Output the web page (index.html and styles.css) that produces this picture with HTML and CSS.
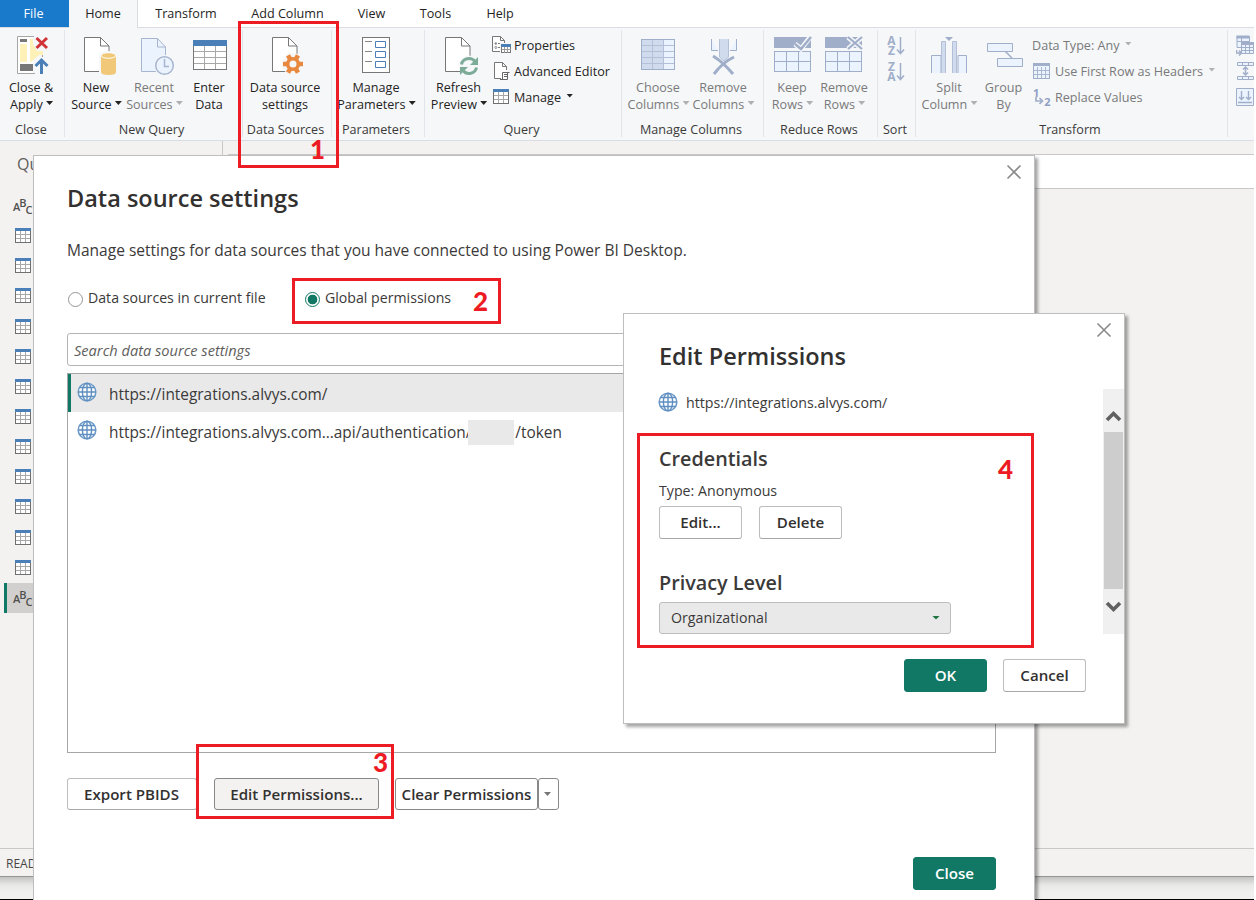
FILE: index.html
```
<!DOCTYPE html>
<html lang="en">
<head>
    <meta charset="UTF-8">
    <meta name="viewport" content="width=device-width, initial-scale=1.0">
    <title>Power Query Editor</title>
    <link rel="stylesheet" href="styles.css">
</head>
<body>
    <!-- Shared icons -->
    <svg class="sprite" width="0" height="0">
        <symbol id="page" viewBox="0 0 26 36">
            <path d="M.5 .5H16.5L25 9V34.5H.5Z" fill="#fff" stroke="#777"/>
            <path d="M16.5 .5V9H25" fill="none" stroke="#777"/>
        </symbol>
        <symbol id="table" viewBox="0 0 16 15">
            <rect width="16" height="15" fill="#707070"/>
            <rect x="1" y="3" width="14" height="11" fill="#fff"/>
            <path d="M5.5 3V14M10.5 3V14M1 6.5H15M1 10.5H15" stroke="#a8a8a8" fill="none"/>
            <rect width="16" height="3" fill="#4a7fb8"/>
        </symbol>
        <symbol id="globe" viewBox="0 0 20 20">
            <circle cx="10" cy="10" r="8.8" fill="#fff" stroke="#6f9bc8" stroke-width="1.6"/>
            <ellipse cx="10" cy="10" rx="4.6" ry="8.8" fill="none" stroke="#5f8fc1" stroke-width="1.4"/>
            <path d="M10 1V19M1 10H19M2.5 5.5H17.5M2.5 14.5H17.5" stroke="#5f8fc1" stroke-width="1.4"/>
        </symbol>
        <symbol id="cross" viewBox="0 0 16 16">
            <path d="M1.5 1.5L14.5 14.5M14.5 1.5L1.5 14.5" stroke="#8a8a8a" stroke-width="1.6"/>
        </symbol>
    </svg>

    <div class="app">
        <nav class="tabs">
            <span class="tab tab-file">File</span>
            <span class="tab tab-home">Home</span>
            <span class="tab tab-transform">Transform</span>
            <span class="tab tab-add">Add Column</span>
            <span class="tab tab-view">View</span>
            <span class="tab tab-tools">Tools</span>
            <span class="tab tab-help">Help</span>
        </nav>

        <div class="ribbon">
            <div class="group g-close">
                <div class="group-body">
                    <div class="item">
                        <svg width="40" height="40" viewBox="0 0 40 40">
                            <path d="M22 1.500H6.500V38.500H22" fill="#fff" stroke="#a6a6a6"/>
                            <path d="M22 1.500H23M31.500 16V22M22 38.500H24" stroke="#a6a6a6"/>
                            <rect x="9" y="4" width="7" height="3" fill="#777"/>
                            <path d="M9 9H16V27H9ZM19 4H22V9L26 16H32V20L28 20L20 27H19Z" fill="#fff1b8"/>
                            <rect x="9" y="29" width="13" height="7" fill="#777"/>
                            <path d="M25.500 3L36 13M36 3L25.500 13" stroke="#d13438" stroke-width="3"/>
                            <path d="M24.500 31L30.500 25L36.500 31M30.500 26V39" fill="none" stroke="#4a7fb8" stroke-width="3"/>
                        </svg>
                        <span>Close &amp;</span><span>Apply <i class="caret"></i></span>
                    </div>
                </div>
                <div class="group-name">Close</div>
            </div>

            <div class="group g-new">
                <div class="group-body">
                    <div class="item">
                        <svg width="40" height="40" viewBox="0 0 40 40">
                            <use href="#page" x="8" y="2" width="26" height="36"/>
                            <path d="M23 20Q23 16 32 16Q41 16 41 20V41H23Z" fill="#f5f7f9"/>
                            <path d="M25 21V37Q25 40 32.500 40Q40 40 40 37V21Z" fill="#f0c878"/>
                            <ellipse cx="32.500" cy="20.500" rx="7.300" ry="2.800" fill="#f0c878" stroke="#fff"/>
                        </svg>
                        <span>New</span><span>Source <i class="caret"></i></span>
                    </div>
                    <div class="item off">
                        <svg width="40" height="40" viewBox="0 0 40 40">
                            <path d="M7.500 3.500H23.500L31.500 12V36.500H7.500Z" fill="#ebf3fe" stroke="#a7b5d0"/>
                            <path d="M23.500 3.500V12H31.500" fill="none" stroke="#a7b5d0"/>
                            <circle cx="30.500" cy="30.500" r="10.500" fill="#f5f7f9"/>
                            <circle cx="30.500" cy="30.500" r="8.800" fill="#ebf3fe" stroke="#a7b5d0" stroke-width="1.500"/>
                            <path d="M30.500 24V31.500H35" fill="none" stroke="#a7b5d0" stroke-width="1.500"/>
                        </svg>
                        <span>Recent</span><span>Sources <i class="caret"></i></span>
                    </div>
                    <div class="item">
                        <svg width="40" height="40" viewBox="0 0 40 40">
                            <rect x="4.500" y="5.500" width="33" height="29" fill="#fff" stroke="#777"/>
                            <path d="M15.500 11V34M26.500 11V34M5 16.500H37M5 22.500H37M5 28.500H37" stroke="#a8a8a8"/>
                            <rect x="4" y="5" width="34" height="6" fill="#4a7fb8"/>
                        </svg>
                        <span>Enter</span><span>Data</span>
                    </div>
                </div>
                <div class="group-name">New Query</div>
            </div>

            <div class="group g-sources">
                <div class="group-body">
                    <div class="item">
                        <svg width="40" height="40" viewBox="0 0 40 40">
                            <use href="#page" x="7" y="2" width="26" height="36"/>
                            <circle cx="28" cy="29" r="11" fill="#f5f7f9"/>
                            <g stroke="#e8893f" stroke-width="4.600">
                                <path d="M18 29H38M23 20.300L33 37.700M33 20.300L23 37.700"/>
                            </g>
                            <circle cx="28" cy="29" r="5.300" fill="#f5f7f9" stroke="#e8893f" stroke-width="3.600"/>
                        </svg>
                        <span>Data source</span><span>settings</span>
                    </div>
                </div>
                <div class="group-name">Data Sources</div>
            </div>

            <div class="group g-params">
                <div class="group-body">
                    <div class="item">
                        <svg width="40" height="40" viewBox="0 0 40 40">
                            <rect x="6.500" y="2.500" width="27" height="35" fill="#fff" stroke="#777"/>
                            <path d="M9 6.500H16M9 16.500H16M9 26.500H16" stroke="#888"/>
                            <path d="M19.500 6.500H29.500V12.500H19.500ZM19.500 16.500H29.500V22.500H19.500ZM19.500 26.500H29.500V32.500H19.500Z" fill="#fff" stroke="#4a7fb8"/>
                        </svg>
                        <span>Manage</span><span>Parameters <i class="caret"></i></span>
                    </div>
                </div>
                <div class="group-name">Parameters</div>
            </div>

            <div class="group g-query">
                <div class="group-body">
                    <div class="item">
                        <svg width="40" height="40" viewBox="0 0 40 40">
                            <use href="#page" x="6" y="2" width="26" height="36"/>
                            <circle cx="30" cy="31" r="10.500" fill="#f5f7f9"/>
                            <path d="M22.500 29.500A7.500 7 0 0 1 36 26.500M37.500 32.500A7.500 7 0 0 1 24 35.500" fill="none" stroke="#7cab98" stroke-width="3"/>
                            <path d="M39 22V30H31ZM21 40V32H29Z" fill="#7cab98"/>
                        </svg>
                        <span>Refresh</span><span>Preview <i class="caret"></i></span>
                    </div>
                    <div class="small-list">
                        <div class="small">
                            <svg width="20" height="20" viewBox="0 0 20 20">
                                <path d="M.5 1.500H8.500L12.500 5.500V16.500H.5Z" fill="#fff" stroke="#777"/>
                                <path d="M8.500 1.500V5.500H12.500M6 8.500H9M6 12.500H8" fill="none" stroke="#777"/>
                                <circle cx="3.800" cy="8.500" r="1.200" fill="#888"/><circle cx="3.800" cy="12.500" r="1" fill="none" stroke="#888"/>
                                <rect x="8" y="8" width="12" height="12" fill="#f5f7f9"/>
                                <rect x="9.500" y="9.500" width="9" height="8" fill="#fff" stroke="#777"/>
                                <path d="M12.500 12V18M15.500 12V18M10 14.500H19" stroke="#999"/>
                                <rect x="9" y="9" width="10" height="3" fill="#4a7fb8"/>
                            </svg>
                            <span>Properties</span>
                        </div>
                        <div class="small">
                            <svg width="20" height="20" viewBox="0 0 20 20">
                                <path d="M9 17.500H2.500V1.500H10.500L14.500 5.500V9" fill="#fff" stroke="#777"/>
                                <path d="M10.500 1.500V5.500H14.500" fill="none" stroke="#777"/>
                                <path d="M10.500 11.500H17.500M10.500 11.500V18.500H15.500V12M8 18.500H15" fill="#fff" stroke="#666"/>
                                <path d="M12 13.500H15M12 15.500H15" stroke="#666"/>
                            </svg>
                            <span>Advanced Editor</span>
                        </div>
                        <div class="small">
                            <svg width="20" height="20" viewBox="0 0 20 20"><use href="#table" x="1" y="2" width="16" height="15"/></svg>
                            <span>Manage <i class="caret"></i></span>
                        </div>
                    </div>
                </div>
                <div class="group-name">Query</div>
            </div>

            <div class="group g-columns">
                <div class="group-body">
                    <div class="item off">
                        <svg width="40" height="40" viewBox="0 0 40 40">
                            <rect x="3.500" y="4.500" width="33" height="30" fill="#ebf3fe" stroke="#a0aec9"/>
                            <rect x="4" y="5" width="22" height="29" fill="#d0dced"/>
                            <path d="M14.500 5V34M25.500 5V34M4 10.500H36M4 16.500H36M4 22.500H36M4 28.500H36" stroke="#b3c0d8"/>
                        </svg>
                        <span>Choose</span><span>Columns <i class="caret"></i></span>
                    </div>
                    <div class="item off">
                        <svg width="40" height="40" viewBox="0 0 40 40">
                            <path d="M8.500 4V15.500H15M33.500 4V15.500H27" fill="#ebf3fe" stroke="#a0aec9"/>
                            <path d="M16.500 4V22L21 26L25.500 22V4" fill="#d0dced" stroke="#b3c0d8"/>
                            <path d="M10 21L30 39M31 22L11 39" stroke="#f5f7f9" stroke-width="5"/>
                            <path d="M10 21Q20 27 30 39M31 22Q20 27 11 39" fill="none" stroke="#a0aec9" stroke-width="3"/>
                        </svg>
                        <span>Remove</span><span>Columns <i class="caret"></i></span>
                    </div>
                </div>
                <div class="group-name">Manage Columns</div>
            </div>

            <div class="group g-rows">
                <div class="group-body">
                    <div class="item off">
                        <svg width="40" height="40" viewBox="0 0 40 40">
                            <rect x="2" y="2" width="37" height="11" fill="#a0aec9"/>
                            <rect x="2.500" y="16.500" width="36" height="20" fill="#ebf3fe" stroke="#a0aec9"/>
                            <path d="M14.500 16V37M26.500 16V37M2 26.500H39" stroke="#a0aec9"/>
                            <path d="M23 9L29 14L39 1" fill="none" stroke="#f5f7f9" stroke-width="5"/>
                            <path d="M23 9L29 14L39 2" fill="none" stroke="#a0aec9" stroke-width="2.500"/>
                        </svg>
                        <span>Keep</span><span>Rows <i class="caret"></i></span>
                    </div>
                    <div class="item off">
                        <svg width="40" height="40" viewBox="0 0 40 40">
                            <rect x="1" y="2" width="37" height="11" fill="#a0aec9"/>
                            <rect x="1.500" y="16.500" width="36" height="20" fill="#ebf3fe" stroke="#a0aec9"/>
                            <path d="M13.500 16V37M25.500 16V37M1 26.500H38" stroke="#a0aec9"/>
                            <path d="M24 2L38 14M38 2L24 14" stroke="#f5f7f9" stroke-width="5"/>
                            <path d="M24 2L38 14M38 2L24 14" stroke="#a0aec9" stroke-width="2.200"/>
                        </svg>
                        <span>Remove</span><span>Rows <i class="caret"></i></span>
                    </div>
                </div>
                <div class="group-name">Reduce Rows</div>
            </div>

            <div class="group g-sort">
                <div class="group-body">
                    <div class="sort-icon">
                        <span><b>A</b><b>Z</b></span>
                        <svg width="9" height="19" viewBox="0 0 9 19"><path d="M4.500 1V17M1 13.500L4.500 17.500L8 13.500" fill="none" stroke="#a0aec9" stroke-width="1.500"/></svg>
                    </div>
                    <div class="sort-icon">
                        <span><b>Z</b><b>A</b></span>
                        <svg width="9" height="19" viewBox="0 0 9 19"><path d="M4.500 1V17M1 13.500L4.500 17.500L8 13.500" fill="none" stroke="#a0aec9" stroke-width="1.500"/></svg>
                    </div>
                </div>
                <div class="group-name">Sort</div>
            </div>

            <div class="group g-transform">
                <div class="group-body">
                    <div class="item off">
                        <svg width="40" height="40" viewBox="0 0 40 40">
                            <path d="M2.500 38V20.500H12V38M37.500 38V20.500H29V38" fill="#ebf3fe" stroke="#a0aec9"/>
                            <path d="M12.500 38V6.500H16.500V38M23.500 38V6.500H27.500V38" fill="#d0dced" stroke="#b3c0d8"/>
                            <path d="M16 2H24L20 6Z" fill="#a0aec9"/>
                        </svg>
                        <span>Split</span><span>Column <i class="caret"></i></span>
                    </div>
                    <div class="item off">
                        <svg width="40" height="40" viewBox="0 0 40 40">
                            <path d="M21 16L28 23" stroke="#a0aec9" stroke-width="1.500"/>
                            <path d="M3.500 8.500H28.500V16.500H3.500ZM13.500 23.500H38.500V31.500H13.500Z" fill="#ebf3fe" stroke="#a0aec9"/>
                        </svg>
                        <span>Group</span><span>By</span>
                    </div>
                    <div class="small-list off">
                        <div class="small"><span>Data Type: Any <i class="caret"></i></span></div>
                        <div class="small">
                            <svg width="20" height="20" viewBox="0 0 20 20">
                                <rect x="1.500" y="2.500" width="16" height="15" fill="#ebf3fe" stroke="#a0aec9"/>
                                <path d="M5.500 6V17M9.500 6V17M13.500 6V17M2 9.500H17M2 13.500H17" stroke="#a9b7d0"/>
                                <rect x="1" y="2" width="17" height="3" fill="#a0aec9"/>
                            </svg>
                            <span>Use First Row as Headers <i class="caret"></i></span>
                        </div>
                        <div class="small">
                            <span class="replace-icon"><b>1</b><svg width="9" height="8" viewBox="0 0 9 8"><path d="M1 0V4H7M4.500 1L7.500 4L4.500 7" fill="none" stroke="#a0aec9" stroke-width="1.700"/></svg><b>2</b></span>
                            <span>Replace Values</span>
                        </div>
                    </div>
                </div>
                <div class="group-name">Transform</div>
            </div>

            <div class="group g-more">
                <div class="group-body">
                    <svg width="18" height="72" viewBox="0 0 18 72" fill="#ebf3fe" stroke="#a0aec9">
                        <path d="M.5 1.500H13.500V12.500H1V2M1 6.500H13M5.500 3V12"/>
                        <path d="M.5 2H13.500" stroke-width="3"/>
                        <path d="M5.500 7.500H17.500V18.500H5.500ZM5 12.500H18M5 15.500H18M9.500 8V18M13.500 8V18"/>
                        <path d="M5 8.500H18" stroke-width="3"/>
                        <path d="M.5 15V18H5M3 15.500L5.500 18L3 20.500" fill="none" stroke-width="1.500"/>
                        <path d="M1.500 27.500H17.500V30.500H1.500ZM1.500 41.500H17.500V44.500H1.500ZM6.500 27V31M12.500 27V31M6.500 41V45M12.500 41V45"/>
                        <path d="M9.500 32V40M7 34.500L9.500 32L12 34.500M7 37.500L9.500 40L12 37.500" fill="none" stroke-width="1.500"/>
                        <path d="M.5 53.500H17.500V70.500H.5Z"/>
                        <path d="M5.500 56V64M3 62L5.500 64.500L8 62M12.500 56V64M10 62L12.500 64.500L15 62M2 67.500H16" fill="none" stroke-width="1.400"/>
                    </svg>
                </div>
            </div>
        </div>

        <div class="workspace">
            <aside class="queries">
                <h3>Queries</h3>
                <ul>
                    <li class="abc"><sub>A</sub><sup>B</sup><sub>C</sub></li>
                    <li><svg width="16" height="15"><use href="#table"/></svg></li>
                    <li><svg width="16" height="15"><use href="#table"/></svg></li>
                    <li><svg width="16" height="15"><use href="#table"/></svg></li>
                    <li><svg width="16" height="15"><use href="#table"/></svg></li>
                    <li><svg width="16" height="15"><use href="#table"/></svg></li>
                    <li><svg width="16" height="15"><use href="#table"/></svg></li>
                    <li><svg width="16" height="15"><use href="#table"/></svg></li>
                    <li><svg width="16" height="15"><use href="#table"/></svg></li>
                    <li><svg width="16" height="15"><use href="#table"/></svg></li>
                    <li><svg width="16" height="15"><use href="#table"/></svg></li>
                    <li><svg width="16" height="15"><use href="#table"/></svg></li>
                    <li><svg width="16" height="15"><use href="#table"/></svg></li>
                    <li class="abc selected"><sub>A</sub><sup>B</sup><sub>C</sub></li>
                </ul>
            </aside>
            <main class="content"><div class="formula-bar"></div></main>
        </div>
        <footer class="status">READY</footer>
        <div class="below"></div>

        <!-- Data source settings -->
        <section class="dialog settings">
            <svg class="dialog-close" width="16" height="16"><use href="#cross"/></svg>
            <h1>Data source settings</h1>
            <p class="intro">Manage settings for data sources that you have connected to using Power BI Desktop.</p>
            <div class="radios">
                <label><i class="radio"></i><span>Data sources in current file</span></label>
                <label><i class="radio on"></i><span>Global permissions</span></label>
            </div>
            <div class="search"><span>Search data source settings</span></div>
            <div class="sources">
                <div class="source active"><svg width="20" height="20"><use href="#globe"/></svg><span>https://integrations.alvys.com/</span></div>
                <div class="source"><svg width="20" height="20"><use href="#globe"/></svg><span>https://integrations.alvys.com...api/authentication/</span><i class="redacted"></i><span>/token</span></div>
            </div>
            <div class="actions">
                <span class="btn export">Export PBIDS</span>
                <span class="btn edit">Edit Permissions...</span>
                <span class="btn clear">Clear Permissions</span>
                <span class="btn more"><i class="caret"></i></span>
            </div>
            <div class="dialog-foot"><span class="btn primary">Close</span></div>
        </section>

        <!-- Edit permissions -->
        <section class="dialog permissions">
            <svg class="dialog-close" width="16" height="16"><use href="#cross"/></svg>
            <h1>Edit Permissions</h1>
            <div class="perm-main">
                <div class="perm-form">
                    <div class="perm-url"><svg width="20" height="20"><use href="#globe"/></svg><span>https://integrations.alvys.com/</span></div>
                    <h2>Credentials</h2>
                    <p class="type">Type: Anonymous</p>
                    <div class="cred-buttons"><span class="btn">Edit...</span><span class="btn">Delete</span></div>
                    <h2 class="privacy">Privacy Level</h2>
                    <div class="select"><span>Organizational</span><i class="caret"></i></div>
                </div>
                <div class="scrollbar">
                    <svg width="21" height="43" viewBox="0 0 21 43"><path d="M4 31L10.500 24.500L17 31" fill="none" stroke="#606060" stroke-width="3.600"/></svg>
                    <div class="thumb"></div>
                    <svg width="21" height="45" viewBox="0 0 21 45"><path d="M4 14L10.500 20.500L17 14" fill="none" stroke="#606060" stroke-width="3.600"/></svg>
                </div>
            </div>
            <div class="dialog-foot"><span class="btn primary">OK</span><span class="btn">Cancel</span></div>
        </section>

        <!-- Step callouts -->
        <div class="callout c1"><b>1</b></div>
        <div class="callout c2"><b>2</b></div>
        <div class="callout c3"><b>3</b></div>
        <div class="callout c4"><b>4</b></div>
    </div>
</body>
</html>
```
FILE: styles.css
```
* {
    margin: 0;
    padding: 0;
    box-sizing: border-box;
}

body {
    font-family: "Open Sans", "Noto Sans", sans-serif;
    font-size: 12.6px;
    color: #252423;
    background: #fff;
    overflow: hidden;
}

svg {
    display: block;
    flex: none;
}

.sprite {
    position: absolute;
}

.app {
    position: relative;
    width: 1254px;
    height: 900px;
    overflow: hidden;
    display: flex;
    flex-direction: column;
    white-space: nowrap;
}

/* Tabs */
.tabs {
    display: flex;
    height: 28px;
    flex: none;
    border-bottom: 1px solid #d9dce0;
}

.tab {
    line-height: 27px;
    text-align: center;
}

.tab-file {
    width: 69px;
    padding-right: 2px;
    background: #1979ca;
    color: #fff;
}

.tab-home {
    width: 69px;
    height: 28px;
    background: #f5f7f9;
    border-right: 1px solid #d9dce0;
}

.tab-transform { width: 96px; }
.tab-add { width: 107px; }
.tab-view { width: 61px; }
.tab-tools { width: 67px; }
.tab-help { width: 62px; }

/* Ribbon */
.ribbon {
    display: flex;
    height: 113px;
    flex: none;
    padding-top: 2px;
    background: #f5f7f9;
    border-bottom: 1px solid #d9dce0;
}

.group {
    display: flex;
    flex-direction: column;
    height: 107px;
    flex: none;
    border-right: 1px solid #e1e4e8;
}

.group-body {
    display: flex;
    flex: none;
    height: 89px;
    padding-top: 5px;
}

.group-name {
    flex: none;
    line-height: 21px;
    text-align: center;
    color: #3b3a39;
}

.item {
    display: flex;
    flex-direction: column;
    align-items: center;
    line-height: 17px;
}

.item svg {
    margin-bottom: 4px;
    overflow: visible;
}

.off {
    color: #7a7a7a;
}

.caret {
    display: inline-block;
    width: 7px;
    height: 4px;
    margin-left: 1px;
    vertical-align: 4px;
    background: #252423;
    clip-path: polygon(0 0, 100% 0, 50% 100%);
}

.item .caret {
    margin: 0 -1px 0 0;
}

.off .caret {
    background: #b0b0b0;
}

.small {
    display: flex;
    align-items: center;
    gap: 2px;
    height: 26px;
}

.small-list {
    margin-top: -3px;
}

.small .caret {
    margin-left: 2px;
}

.g-close { width: 65px; }
.g-close .item { width: 62px; }
.g-close .group-name { padding-right: 2px; }
.g-new { width: 178px; }
.g-new .group-body { padding-left: 2px; }
.g-new .item { width: 58px; }
.g-new .item:last-child { width: 52px; }
.g-new .group-name { padding-right: 4px; }
.g-sources { width: 89px; }
.g-sources .item { width: 84px; }
.g-sources .group-name { padding-right: 3px; }
.g-params { width: 93px; }
.g-params .item { width: 88px; }
.g-params .group-name { padding-right: 4px; }
.g-query { width: 197px; }
.g-query .item { width: 67px; }
.g-query .group-name { padding-right: 3px; }
.g-columns { width: 142px; }
.g-columns .item { width: 72px; }
.g-columns .item:last-child { width: 58px; }
.g-columns .group-name { padding-right: 3px; }
.g-rows { width: 114px; }
.g-rows .item { width: 56px; }
.g-rows .item:last-child { width: 48px; }
.g-rows .group-name { padding-right: 3px; }
.g-sort { width: 38px; }
.g-sort .group-body { flex-direction: column; gap: 5px; padding: 6px 0 0 9px; }
.g-sort .group-name { padding-right: 3px; }
.g-transform { width: 312px; }
.g-transform .item { width: 66px; }
.g-transform .item + .item { width: 43px; }
.g-transform .small-list { padding-left: 7px; }
.g-transform .small { gap: 3px; }
.g-transform .group-name { padding-right: 3px; }
.g-more { border: 0; }
.g-more .group-body { padding-left: 8px; }

.sort-icon {
    display: flex;
    height: 21px;
    color: #a0aec9;
}

.sort-icon span {
    display: flex;
    flex-direction: column;
    width: 9px;
    font-size: 12px;
    line-height: 10px;
    text-align: center;
}

.replace-icon {
    display: flex;
    align-items: center;
    width: 20px;
    padding-left: 1px;
    font-size: 11px;
    color: #8fa0c2;
}

.replace-icon b:first-child { transform: translateY(-5px); }
.replace-icon b:last-child { transform: translateY(4px); }
.replace-icon svg { transform: translateY(4px); margin: 0 0 0 -4px; }

/* Workspace */
.workspace {
    display: flex;
    height: 707px;
    flex: none;
    background: #f3f2f1;
}

.queries {
    width: 223px;
    border-right: 1px solid #c8c8c8;
}

.queries h3 {
    padding: 13px 0 0 17px;
    height: 50px;
    font-size: 16px;
    font-weight: 400;
    line-height: 20px;
    color: #605e5c;
}

.queries ul {
    list-style: none;
}

.queries li {
    display: flex;
    align-items: center;
    height: 30.15px;
    margin-left: 4px;
    padding: 0 0 1px 11px;
}

.queries .abc {
    padding: 1px 0 0 9px;
    font-weight: 600;
    color: #505050;
}

.abc sub, .abc sup {
    margin-right: -1px;
    font-size: 11px;
    line-height: 1;
}

.abc sup { transform: translateY(-4px); }
.abc sub:last-child { transform: translateY(3px); }

.queries .selected {
    padding-left: 6px;
    border-left: 3px solid #117865;
    background: #d2d0ce;
}

.content {
    flex: 1;
    padding: 13px 0 0 5px;
}

.formula-bar {
    height: 35px;
    border: solid #c8c8c8;
    border-width: 1px 0;
    background: #fff;
}

.status {
    height: 29px;
    flex: none;
    padding-left: 6px;
    font-size: 12px;
    line-height: 29px;
    color: #484644;
    background: #f3f2f1;
    border-top: 1px solid #c8c8c8;
    border-bottom: 1px solid #979593;
}

.below {
    height: 23px;
    flex: none;
    background: linear-gradient(#c4c4c2, #e8e8e6 8px, #f0f0ef 15px);
    border-bottom: 1px solid #000;
}

/* Dialogs */
.dialog {
    position: absolute;
    display: flex;
    flex-direction: column;
    background: #fff;
    border: 1px solid #bebebe;
    box-shadow: 3px 3px 3px rgba(0, 0, 0, .35);
    color: #3b3a39;
}

.dialog h1 {
    font-size: 23.5px;
    font-weight: 600;
    line-height: 32px;
    color: #323130;
}

.dialog-close {
    position: absolute;
}

.btn {
    display: flex;
    align-items: center;
    justify-content: center;
    height: 33px;
    width: 83px;
    padding-bottom: 2px;
    border: 1px solid #bdbdbd;
    border-bottom-color: #a8a8a8;
    border-radius: 3px;
    background: #fff;
    font-size: 15.1px;
    font-weight: 600;
    color: #323130;
}

.btn.primary {
    background: #117865;
    border-color: #117865;
    color: #fff;
}

.settings {
    left: 33px;
    top: 155px;
    width: 1002px;
    height: 760px;
    padding: 26px 38px 0 33px;
}

.settings .dialog-close {
    left: 972px;
    top: 8px;
}

.intro {
    margin-top: 25px;
    font-size: 15.53px;
    line-height: 22px;
}

.radios {
    display: flex;
    margin-top: 26px;
    height: 24px;
    font-size: 14.15px;
    line-height: 22px;
}

.radios label {
    display: flex;
    width: 237px;
}

.radio {
    width: 15px;
    height: 15px;
    margin: 5px 5px 0 1px;
    border: 1px solid #979593;
    border-radius: 50%;
}

.radio.on {
    border-color: #117865;
    background: radial-gradient(circle, #117865 4.5px, #fff 5.2px);
}

.search {
    height: 33px;
    margin-top: 22px;
    padding-left: 6px;
    border: 1px solid #b5b5b5;
    border-radius: 3px;
    font-size: 14.6px;
    font-style: italic;
    line-height: 33px;
    color: #605e5c;
}

.sources {
    height: 380px;
    margin-top: 7px;
    border: 1px solid #a6a6a6;
}

.source {
    display: flex;
    align-items: center;
    height: 38px;
    padding: 2px 0 0 9px;
    font-size: 15.4px;
}

.source svg {
    margin: -4px 12px 0 0;
}

.source.active {
    padding-left: 6px;
    border-left: 3px solid #117865;
    background: #e9e9e9;
}

.redacted {
    width: 46px;
    height: 25px;
    margin: 0 1px 0 -3px;
    background: #e9e9e9;
}

.actions {
    display: flex;
    margin-top: 25px;
}

.actions .btn {
    height: 32px;
    padding-bottom: 0;
}

.actions .export { width: 130px; padding-right: 1px; }
.actions .edit { width: 165px; margin-left: 17px; background: #f3f2f1; border-color: #8a8886; }
.actions .clear { width: 143px; margin-left: 16px; border-color: #8a8886; }
.actions .more { width: 21px; border-color: #8a8886; }
.actions .more .caret { background: #797775; margin: 0 2px 0 0; }

.dialog-foot {
    display: flex;
    justify-content: flex-end;
    gap: 16px;
}

.settings .dialog-foot {
    margin-top: 47px;
}

.permissions {
    left: 623px;
    top: 313px;
    width: 502px;
    height: 411px;
    padding: 26px 0 0 35px;
}

.permissions .dialog-close {
    left: 472px;
    top: 8px;
}

.perm-main {
    display: flex;
    justify-content: space-between;
    margin-top: 17px;
    height: 245px;
}

.perm-url {
    display: flex;
    align-items: center;
    height: 20px;
    gap: 8px;
    margin: 3px 0 0 -1px;
    font-size: 14.2px;
}

.dialog h2 {
    margin-top: 34px;
    font-size: 19.8px;
    font-weight: 600;
    line-height: 26px;
    color: #3b3a39;
}

.dialog .privacy {
    margin-top: 31px;
}

.type {
    margin-top: 9px;
    font-size: 14.2px;
    line-height: 20px;
}

.cred-buttons {
    display: flex;
    gap: 17px;
    margin-top: 5px;
}

.select {
    display: flex;
    align-items: center;
    justify-content: space-between;
    width: 292px;
    height: 32px;
    margin-top: 6px;
    padding: 0 10px 1px 11px;
    border: 1px solid #bdbdbd;
    border-radius: 3px;
    background: #e9e9e9;
    font-size: 14.2px;
}

.select .caret { width: 8px; background: #217346; }

.scrollbar {
    width: 21px;
    background: #f0f0f0;
}

.thumb {
    width: 19px;
    height: 157px;
    margin-left: 1px;
    background: #cdcdcd;
}

.permissions .dialog-foot {
    margin: 25px 38px 0 0;
}

/* Callouts */
.callout {
    position: absolute;
    border: 3px solid #ed1c24;
    color: #ed1c24;
    font-family: Lato, "Open Sans", sans-serif;
    font-size: 26px;
    line-height: 30px;
}

.callout b {
    position: absolute;
    font-weight: 900;
}

.c1 { left: 238px; top: 21px; width: 101px; height: 147px; }
.c1 b { right: 11px; bottom: 1px; }
.c2 { left: 292px; top: 278px; width: 209px; height: 46px; }
.c2 b { right: 10px; top: 5px; }
.c3 { left: 196px; top: 744px; width: 198px; height: 75px; }
.c3 b { right: 3px; top: 0; }
.c4 { left: 637px; top: 433px; width: 397px; height: 215px; }
.c4 b { right: 18px; top: 18px; }
```
